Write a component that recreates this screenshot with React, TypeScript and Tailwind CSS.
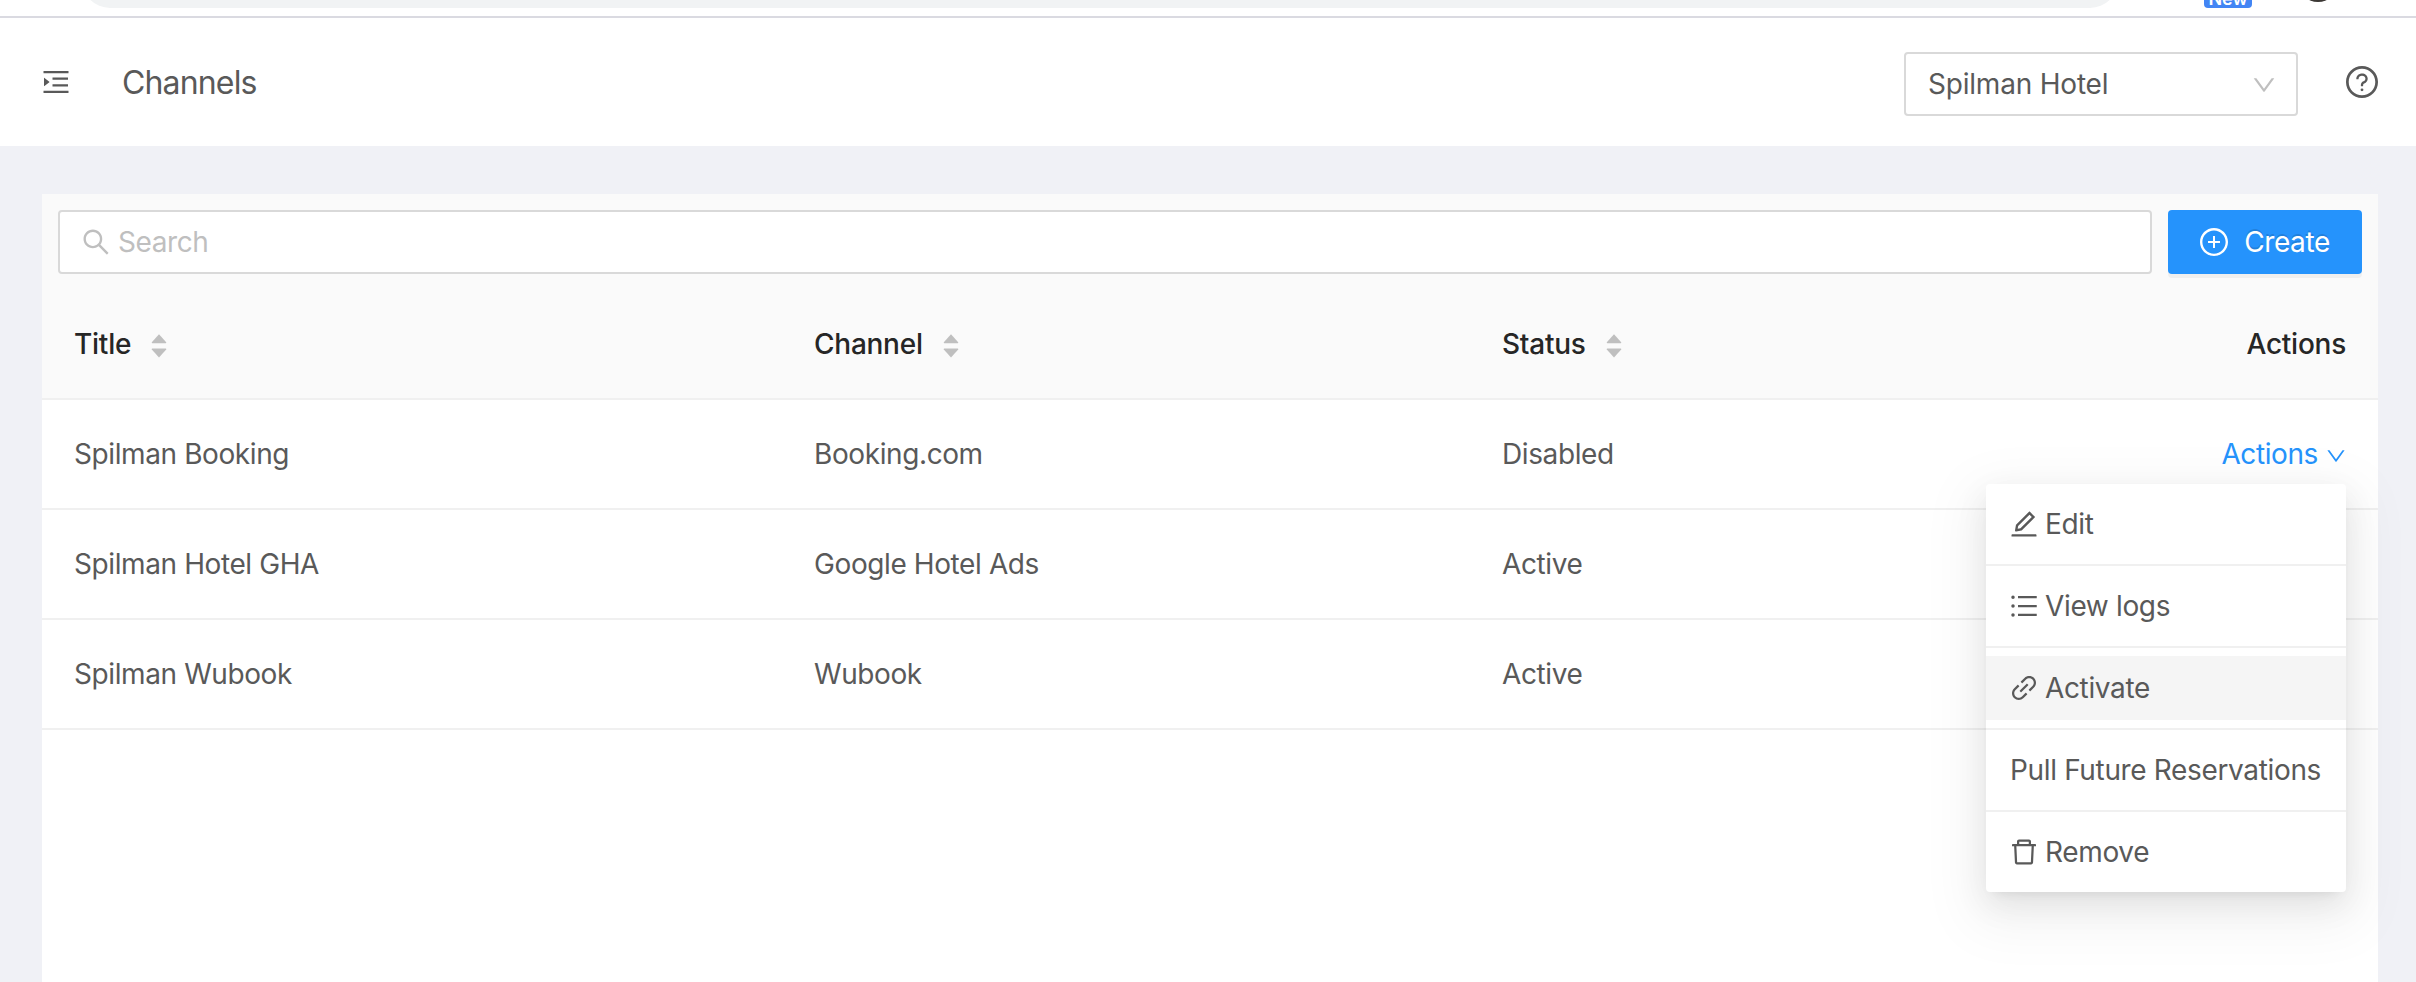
import type { ReactNode } from "react";
import {
  AiOutlineDelete,
  AiOutlineDown,
  AiOutlineEdit,
  AiOutlineLink,
  AiOutlineMenuUnfold,
  AiOutlinePlusCircle,
  AiOutlineQuestionCircle,
  AiOutlineSearch,
  AiOutlineUnorderedList,
} from "react-icons/ai";

const VIEW_BOX = "64 64 896 896";

const rows = [
  { title: "Spilman Booking", channel: "Booking.com", status: "Disabled" },
  { title: "Spilman Hotel GHA", channel: "Google Hotel Ads", status: "Active" },
  { title: "Spilman Wubook", channel: "Wubook", status: "Active" },
];

const columns = "grid grid-cols-[740px_688px_1fr_auto] items-center px-8";

function Sorter() {
  return (
    <svg className="mt-[3px] ml-5 h-6 w-4 text-[#bfbfbf]" viewBox="0 0 16 24" fill="currentColor">
      <path d="M8 0.3 L15.2 8.2 Q15.5 9.3 14.6 9.3 H1.4 Q0.5 9.3 0.8 8.2 Z" />
      <path d="M8 23.5 L15.2 15.6 Q15.5 14.5 14.6 14.5 H1.4 Q0.5 14.5 0.8 15.6 Z" />
    </svg>
  );
}

function HeaderCell({ children }: { children: ReactNode }) {
  return (
    <div className="flex items-center">
      <span>{children}</span>
      <Sorter />
    </div>
  );
}

function MenuItem({ icon, label, active = false }: { icon?: ReactNode; label: string; active?: boolean }) {
  return (
    <div className={`flex h-16 items-center gap-[7px] px-6 ${active ? "bg-[#f5f5f5]" : ""}`}>
      {icon}
      <span className="whitespace-nowrap tracking-[-0.35px]">{label}</span>
    </div>
  );
}

function Divider() {
  return <div className="my-2 h-0.5 bg-[#f0f0f0]" />;
}

function ActionsMenu() {
  return (
    <div className="absolute top-[84px] right-0 z-10 w-[360px] rounded-[4px] bg-white py-2 text-[#595959] shadow-[0_6px_12px_-8px_rgba(0,0,0,0.12),0_12px_32px_0_rgba(0,0,0,0.08),0_18px_56px_16px_rgba(0,0,0,0.05)]">
      <MenuItem icon={<AiOutlineEdit viewBox={VIEW_BOX} size={28} />} label="Edit" />
      <Divider />
      <MenuItem icon={<AiOutlineUnorderedList viewBox={VIEW_BOX} size={28} />} label="View logs" />
      <Divider />
      <MenuItem icon={<AiOutlineLink viewBox={VIEW_BOX} size={28} />} label="Activate" active />
      <Divider />
      <MenuItem label="Pull Future Reservations" />
      <Divider />
      <MenuItem icon={<AiOutlineDelete viewBox={VIEW_BOX} size={28} />} label="Remove" />
    </div>
  );
}

function BrowserStrip() {
  return (
    <div className="flex h-[18px] items-start overflow-hidden border-b-2 border-[#dadae1] bg-white pl-[82px]">
      <div className="flex h-2 w-[2036px] items-end overflow-hidden">
        <div className="h-14 w-full shrink-0 rounded-full bg-[#f1f3f4]" />
      </div>
      <div className="ml-[86px] flex h-2 w-12 items-end justify-center rounded-b-[4px] bg-[#4285f4] text-[18px] leading-[18px] font-semibold text-white">
        <span className="tracking-[0px]">New</span>
      </div>
      <div className="ml-[46px] flex h-[2px] w-10 items-end justify-center overflow-hidden">
        <div className="size-10 shrink-0 rounded-full bg-[#3c3835]" />
      </div>
    </div>
  );
}

export default function App() {
  return (
    <div className="flex h-[982px] w-[2416px] flex-col overflow-hidden bg-[#f0f1f6] font-['Inter','Liberation_Sans',sans-serif] text-[28px] leading-[44px] tracking-[-0.4px] text-[#595959]">
      <BrowserStrip />

      <header className="flex h-32 shrink-0 items-center bg-white pr-[38px] pl-[42px]">
        <AiOutlineMenuUnfold viewBox={VIEW_BOX} size={28} />
        <h1 className="ml-[52px] flex-1 pt-0.5 text-[32px] tracking-[-0.85px]">Channels</h1>
        <div className="mt-1 flex h-16 w-[394px] items-center justify-between rounded-[4px] border-2 border-[#d9d9d9] pr-5 pl-[22px]">
          <span className="tracking-[-0.2px]">Spilman Hotel</span>
          <AiOutlineDown className="mt-0.5 text-[#bfbfbf]" viewBox={VIEW_BOX} size={24} />
        </div>
        <AiOutlineQuestionCircle className="ml-12" viewBox={VIEW_BOX} size={32} />
      </header>

      <main className="mx-[42px] mt-12 mr-[38px] flex flex-1 flex-col bg-white">
        <div className="flex gap-4 bg-[#fafafa] p-4">
          <div className="flex h-16 flex-1 items-center gap-2 rounded-[4px] border-2 border-[#d9d9d9] bg-white px-[22px] text-[#bfbfbf]">
            <AiOutlineSearch viewBox={VIEW_BOX} size={28} />
            <span>Search</span>
          </div>
          <button className="flex h-16 w-[194px] items-center justify-center gap-4 rounded-[4px] bg-[#2593fc] text-white shadow-[0_4px_0_rgba(0,0,0,0.043)] [text-shadow:0_-2px_0_rgba(0,0,0,0.12)]">
            <AiOutlinePlusCircle viewBox={VIEW_BOX} size={28} />
            <span>Create</span>
          </button>
        </div>

        <div className={`${columns} h-[110px] border-b-2 border-[#f0f0f0] bg-[#fafafa] font-medium tracking-[-0.25px] text-[#262626]`}>
          <HeaderCell>Title</HeaderCell>
          <HeaderCell>Channel</HeaderCell>
          <HeaderCell>Status</HeaderCell>
          <span>Actions</span>
        </div>

        {rows.map((row, index) => (
          <div key={row.title} className={`${columns} relative h-[110px] border-b-2 border-[#f0f0f0]`}>
            <span>{row.title}</span>
            <span>{row.channel}</span>
            <span>{row.status}</span>
            {index === 0 && (
              <div className="flex items-center gap-2 text-[#2593fc]">
                <span>Actions</span>
                <AiOutlineDown className="mt-[3px]" viewBox={VIEW_BOX} size={20} />
                <div className="absolute top-0 right-8">
                  <ActionsMenu />
                </div>
              </div>
            )}
          </div>
        ))}
      </main>
    </div>
  );
}
